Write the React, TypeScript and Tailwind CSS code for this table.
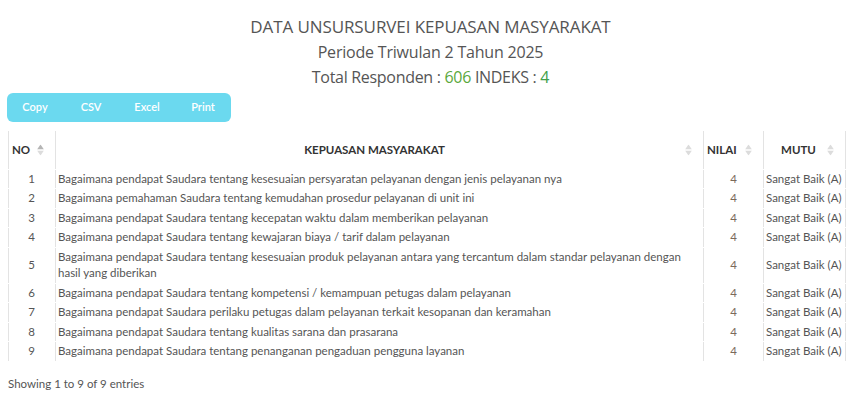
import React from 'react';

const rows = [
  'Bagaimana pendapat Saudara tentang kesesuaian persyaratan pelayanan dengan jenis pelayanan nya',
  'Bagaimana pemahaman Saudara tentang kemudahan prosedur pelayanan di unit ini',
  'Bagaimana pendapat Saudara tentang kecepatan waktu dalam memberikan pelayanan',
  'Bagaimana pendapat Saudara tentang kewajaran biaya / tarif dalam pelayanan',
  'Bagaimana pendapat Saudara tentang kesesuaian produk pelayanan antara yang tercantum dalam standar pelayanan dengan hasil yang diberikan',
  'Bagaimana pendapat Saudara tentang kompetensi / kemampuan petugas dalam pelayanan',
  'Bagaimana pendapat Saudara perilaku petugas dalam pelayanan terkait kesopanan dan keramahan',
  'Bagaimana pendapat Saudara tentang kualitas sarana dan prasarana',
  'Bagaimana pendapat Saudara tentang penanganan pengaduan pengguna layanan',
];

const SortIcon = ({ active }: { active?: boolean }) => (
  <span className="absolute right-[11px] top-1/2 -translate-y-1/2 flex flex-col gap-[1px]">
    <svg width="7" height="5" viewBox="0 0 7 5">
      <path d="M3.5 0L7 5H0z" fill={active ? '#b5b5b5' : '#dcdcdc'} />
    </svg>
    <svg width="7" height="5" viewBox="0 0 7 5">
      <path d="M0 0H7L3.5 5z" fill="#dcdcdc" />
    </svg>
  </span>
);

export default function App() {
  return (
    <div className="w-[861px] h-[400px] bg-white font-['Lato',sans-serif] text-[#555]">
      <div className="pt-[14px] text-center font-['Open_Sans',sans-serif] text-[#555] leading-[25.5px]">
        <p className="text-[17px] tracking-[-0.1px]">DATA UNSURSURVEI KEPUASAN MASYARAKAT</p>
        <p className="text-[16px] tracking-[-0.2px]">Periode Triwulan 2 Tahun 2025</p>
        <p className="text-[16px] tracking-[-0.3px]">
          Total Responden : <span className="text-[#5aa83c]">606</span> INDEKS : <span className="text-[#3fa04a]">4</span>
        </p>
      </div>

      <div className="ml-[7px] mt-[2px] inline-flex h-[29px] w-[224px] items-center rounded-[6px] bg-[#6bd9ef] text-[11px] font-semibold text-white">
        {['Copy', 'CSV', 'Excel', 'Print'].map(b => (
          <span key={b} className="flex-1 text-center">{b}</span>
        ))}
      </div>

      <table className="ml-[8px] mt-[8px] w-[838px] table-fixed border-separate border-spacing-x-0 border-spacing-y-[1px] text-[11.5px]">
        <colgroup>
          <col className="w-[47px]" />
          <col className="w-[648px]" />
          <col className="w-[60px]" />
          <col className="w-[83px]" />
        </colgroup>
        <thead>
          <tr className="h-[38px] font-bold text-[#333] text-[11.5px]">
            <th className="relative border-l border-[#e3e3e3] pl-[3px] text-left">NO<SortIcon active /></th>
            <th className="relative border-l border-[#e3e3e3] pr-[10px] text-center">KEPUASAN MASYARAKAT<SortIcon /></th>
            <th className="relative border-l border-[#e3e3e3] pl-[3px] text-left">NILAI<SortIcon /></th>
            <th className="relative border-l border-r border-[#e3e3e3] pr-[12px] text-center">MUTU<SortIcon /></th>
          </tr>
        </thead>
        <tbody className="leading-[16.5px]">
          {rows.map((q, i) => (
            <tr key={i}>
              <td className="border-l border-[#e3e3e3] py-px pr-[20px] text-right">{i + 1}</td>
              <td className="border-l border-[#e3e3e3] py-px pl-[2px] pr-[10px]">{q}</td>
              <td className="border-l border-[#e3e3e3] py-px pr-[26px] text-right text-[#7a6a5a]">4</td>
              <td className="border-l border-r border-[#e3e3e3] py-px pl-[2px] whitespace-nowrap">Sangat Baik (A)</td>
            </tr>
          ))}
        </tbody>
      </table>

      <p className="ml-[8px] mt-[13px] text-[11.5px]">Showing 1 to 9 of 9 entries</p>
    </div>
  );
}
